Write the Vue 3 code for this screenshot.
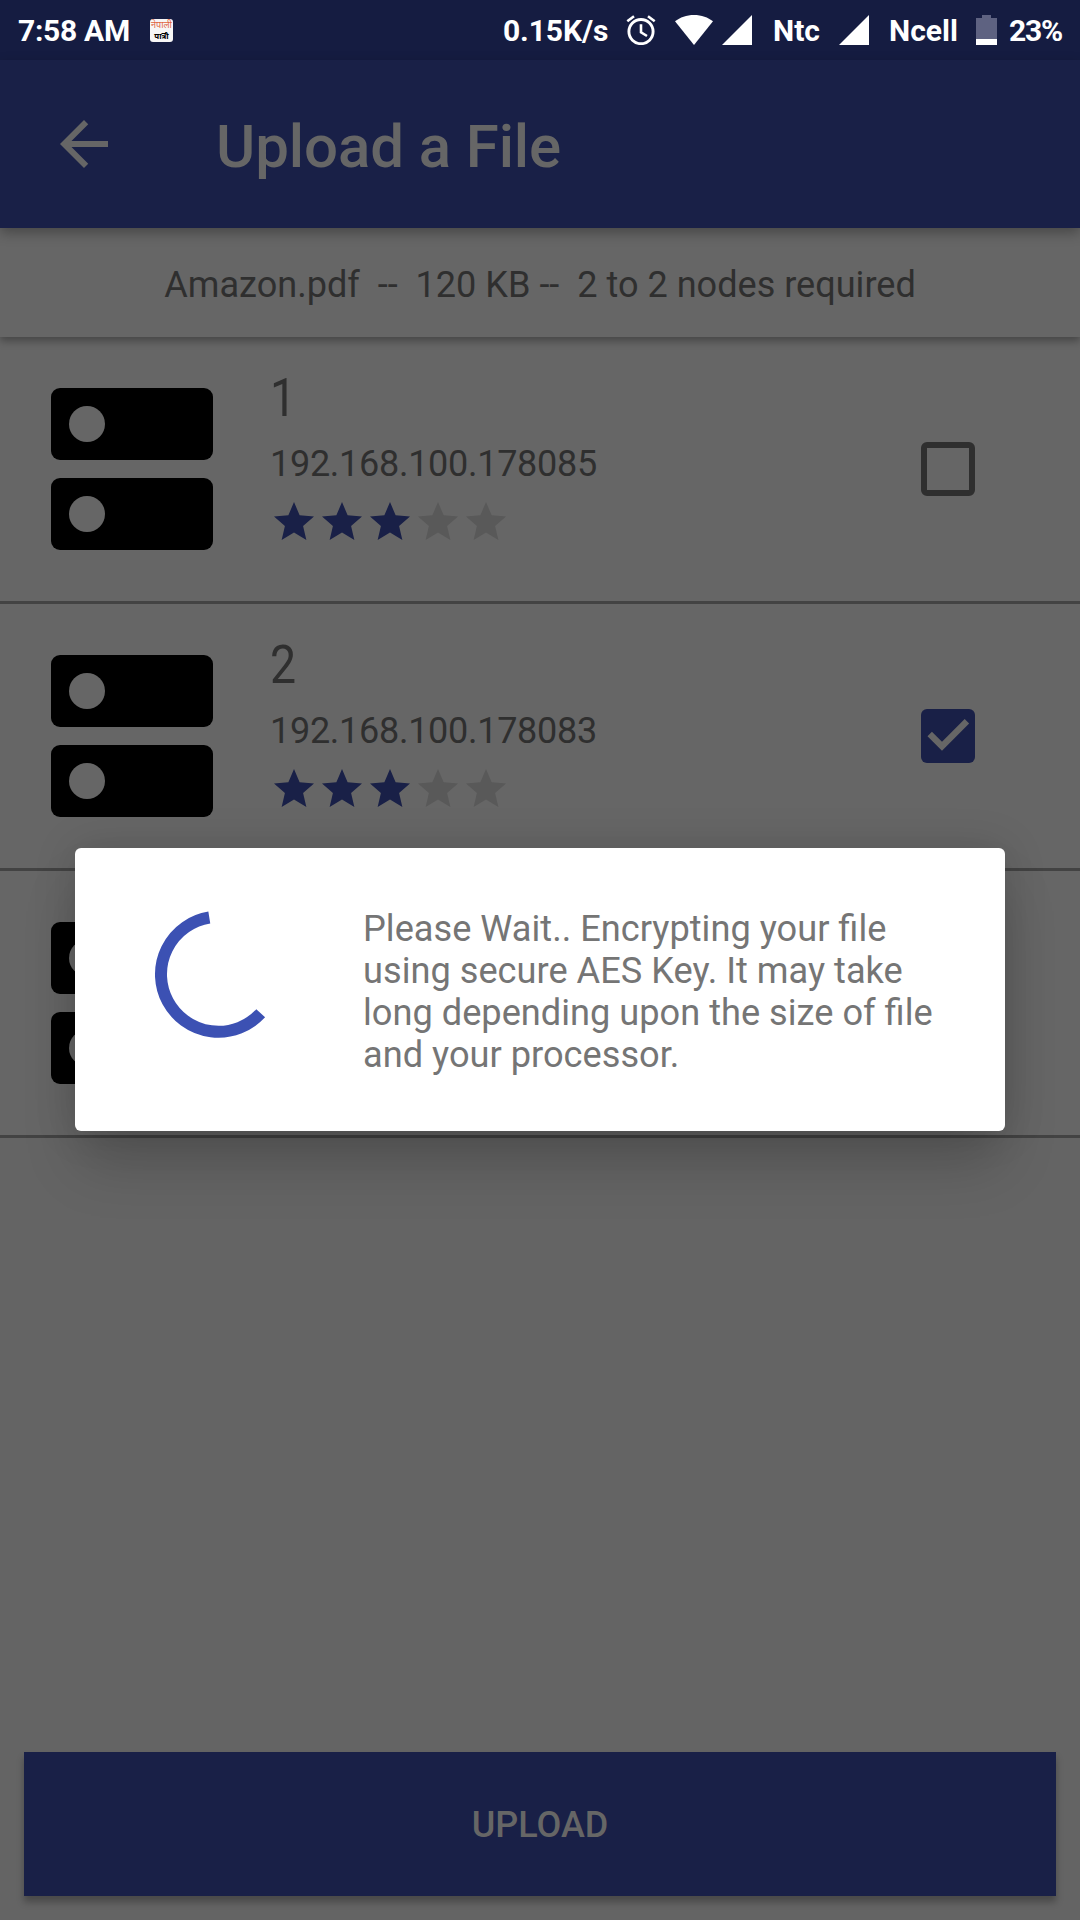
<script setup>
const nodes = [
  { id: 1, name: '1', address: '192.168.100.178085', rating: 3, checked: false },
  { id: 2, name: '2', address: '192.168.100.178083', rating: 3, checked: true },
  { id: 3, name: '', address: '', rating: 3, checked: false },
]
</script>

<template>
  <div class="screen">
    <header class="status">
      <span class="clock">7:58 AM</span>
      <span class="patro"><b>नेपाली</b><i>पात्रो</i></span>
      <span class="speed">0.15K/s</span>
      <svg class="alarm" width="30" height="30" viewBox="0 0 30 30">
        <circle cx="15" cy="16.6" r="12.1" fill="none" stroke="#fff" stroke-width="2.9" />
        <path d="M15 9.2V17.3L21 21M1.3 6.3L8 1.2M28.7 6.3L22 1.2" fill="none" stroke="#fff" stroke-width="2.6" />
      </svg>
      <svg class="wifi" width="38" height="30" viewBox="0 0 38 30">
        <path d="M19 30L0 6.3C5 2.4 11.5 0 19 0S33 2.4 38 6.3z" fill="#fff" />
      </svg>
      <svg class="sig1" width="30" height="30" viewBox="0 0 30 30"><path d="M0 30H30V0z" fill="#fff" /></svg>
      <span class="ntc">Ntc</span>
      <svg class="sig2" width="30" height="30" viewBox="0 0 30 30"><path d="M0 30H30V0z" fill="#fff" /></svg>
      <span class="ncell">Ncell</span>
      <svg class="battery" width="21" height="30" viewBox="0 0 21 30">
        <path d="M0 3H6V0H15V3H21V24H0z" fill="#5e6281" />
        <path d="M0 24H21V30H0z" fill="#fff" />
      </svg>
      <span class="percent">23%</span>
    </header>

    <div class="appbar">
      <svg width="72" height="72" viewBox="0 0 24 24">
        <path d="M20 11H7.83l5.59-5.59L12 4l-8 8 8 8 1.41-1.41L7.83 13H20v-2z" fill="#666" />
      </svg>
      <h1>Upload a File</h1>
    </div>

    <div class="info">Amazon.pdf&nbsp; --&nbsp; 120 KB --&nbsp; 2 to 2 nodes required</div>

    <main>
      <section v-for="node in nodes" :key="node.id" class="row">
        <svg class="server" width="162" height="162" viewBox="0 0 162 162">
          <rect width="162" height="72" rx="9" />
          <rect y="90" width="162" height="72" rx="9" />
          <circle cx="36" cy="36" r="18" fill="#666" />
          <circle cx="36" cy="126" r="18" fill="#666" />
        </svg>
        <div class="details">
          <div class="name">{{ node.name }}</div>
          <div class="address">{{ node.address }}</div>
          <div class="stars">
            <svg v-for="n in 5" :key="n" width="48" height="48" viewBox="0 0 24 24">
              <path
                d="M12 17.27L18.18 21l-1.64-7.03L22 9.24l-7.19-.61L12 2 9.19 8.63 2 9.24l5.46 4.73L5.82 21z"
                :fill="n <= node.rating ? '#192047' : '#595959'"
              />
            </svg>
          </div>
        </div>
        <svg class="check" width="72" height="72" viewBox="0 0 24 24">
          <template v-if="node.checked">
            <rect x="3" y="3" width="18" height="18" rx="2" fill="#192047" />
            <path d="M5.9 11.3L10 15.4L18.3 7.1" fill="none" stroke="#666" stroke-width="2.1" />
          </template>
          <path
            v-else
            d="M5 3H19a2 2 0 0 1 2 2V19a2 2 0 0 1-2 2H5a2 2 0 0 1-2-2V5a2 2 0 0 1 2-2zM5 5V19H19V5z"
            fill="#2f2f2f"
            fill-rule="evenodd"
          />
        </svg>
      </section>
    </main>

    <footer><button>UPLOAD</button></footer>

    <div class="dialog">
      <svg class="spinner" width="128" height="128" viewBox="-64 -64 128 128">
        <path d="M-10.7 -56.5A57.5 57.5 0 1 0 40.7 39.3" fill="none" stroke="#3c51b3" stroke-width="12" />
      </svg>
      <p>Please Wait.. Encrypting your file using secure AES Key. It may take long depending upon the size of file and your processor.</p>
    </div>
  </div>
</template>

<style>
body {
  margin: 0;
  background: #646464;
}
</style>

<style scoped>
.screen {
  position: relative;
  display: flex;
  flex-direction: column;
  width: 1080px;
  height: 1920px;
  overflow: hidden;
  background: #646464;
  font-family: Roboto, "Noto Sans", sans-serif;
}
svg {
  display: block;
  flex: none;
}
.status {
  display: flex;
  align-items: center;
  flex: none;
  box-sizing: border-box;
  height: 60px;
  padding-left: 18px;
  background: #151c41;
  color: #fff;
  font-size: 30px;
  font-weight: 700;
  line-height: 60px;
  white-space: nowrap;
}
.status span {
  flex: none;
  padding-top: 1px;
}
.clock {
  width: 132px;
  letter-spacing: -0.3px;
}
.status .patro {
  display: flex;
  flex-direction: column;
  align-items: center;
  justify-content: center;
  width: 23px;
  height: 23px;
  margin-right: 330px;
  padding: 0;
  border-radius: 3px;
  background: #f7f6f6;
  font: 400 9px/11px "Noto Sans", sans-serif;
}
.patro b {
  height: 11px;
  color: #e0623c;
  font-weight: 400;
}
.patro i {
  height: 11px;
  color: #000;
  font-size: 8px;
  font-style: normal;
  font-weight: 700;
}
.speed {
  width: 123px;
  letter-spacing: -0.1px;
}
.wifi { margin-left: 19px; }
.sig1 { margin-left: 9px; }
.ntc {
  width: 66px;
  margin-left: 21px;
}
.ncell {
  width: 88px;
  margin-left: 20px;
}
.battery { margin-left: -1px; }
.percent {
  margin-left: 12px;
  letter-spacing: -1.2px;
}
.appbar {
  position: relative;
  z-index: 2;
  display: flex;
  align-items: center;
  flex: none;
  box-sizing: border-box;
  height: 168px;
  padding-left: 48px;
  background: #192047;
  box-shadow: 0 5px 12px rgba(0, 0, 0, 0.3);
}
h1 {
  margin: 6px 0 0 96px;
  color: #666;
  font-size: 60px;
  font-weight: 500;
  line-height: 70px;
  letter-spacing: -0.1px;
}
.info {
  position: relative;
  z-index: 1;
  flex: none;
  height: 109px;
  background: #666;
  box-shadow: 0 4px 8px rgba(0, 0, 0, 0.32);
  color: #2f2f2f;
  font-size: 36.1px;
  line-height: 114px;
  text-align: center;
}
main {
  flex: 1;
}
.row {
  display: flex;
  box-sizing: border-box;
  height: 267px;
  padding-left: 51px;
  border-bottom: 3px solid #434343;
  background: #666;
}
.server { margin-top: 51px; }
.details {
  width: 642px;
  margin-left: 57px;
  color: #2f2f2f;
}
.name {
  height: 64px;
  margin-top: 29px;
  font-size: 54px;
  line-height: 64px;
  transform: scaleX(0.86);
  transform-origin: left;
}
.address {
  height: 42px;
  margin-top: 13px;
  font-size: 36px;
  line-height: 42px;
  letter-spacing: -0.28px;
}
.stars {
  display: flex;
  margin-top: 13px;
}
.check { margin-top: 96px; }
footer {
  display: flex;
  flex: none;
  padding: 0 24px 24px;
}
button {
  flex: 1;
  height: 144px;
  padding: 3px 0 0;
  border: 0;
  background: #192047;
  box-shadow: 0 6px 7px rgba(0, 0, 0, 0.28);
  color: #666;
  font: 500 36px/141px Roboto, sans-serif;
}
.dialog {
  position: absolute;
  z-index: 3;
  top: 848px;
  left: 75px;
  display: flex;
  align-items: flex-start;
  box-sizing: border-box;
  width: 930px;
  height: 283px;
  padding: 60px 60px 0 81px;
  border-radius: 6px;
  background: #fff;
  box-shadow: 0 38px 54px -6px rgba(0, 0, 0, 0.18), 0 0 44px rgba(0, 0, 0, 0.14);
}
.spinner {
  margin-top: 2px;
  overflow: visible;
}
p {
  width: 580px;
  margin: 0 0 0 79px;
  color: #757575;
  font-size: 36.2px;
  line-height: 42px;
}
</style>
